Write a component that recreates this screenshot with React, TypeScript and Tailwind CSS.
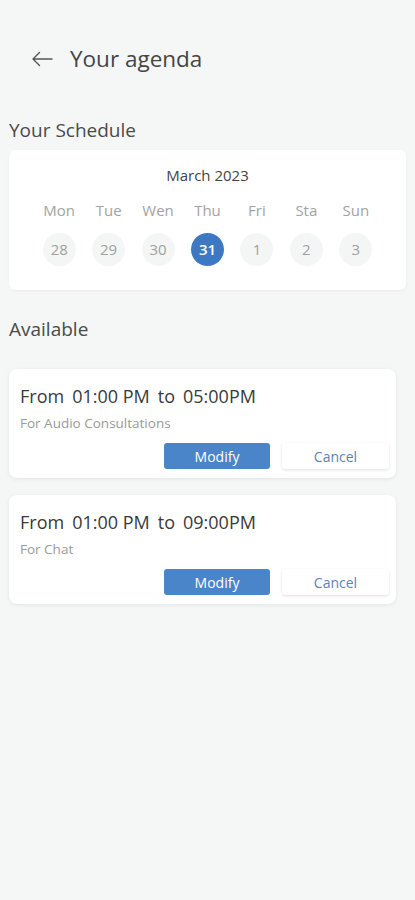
import React from 'react';

const font = { fontFamily: '"Open Sans", "Liberation Sans", sans-serif' };

interface Slot {
  from: string;
  to: string;
  kind: string;
}

const days = [
  { name: 'Mon', num: '28' },
  { name: 'Tue', num: '29' },
  { name: 'Wen', num: '30' },
  { name: 'Thu', num: '31', active: true },
  { name: 'Fri', num: '1' },
  { name: 'Sta', num: '2' },
  { name: 'Sun', num: '3' },
];

const slots: Slot[] = [
  { from: '01:00 PM', to: '05:00PM', kind: 'For Audio Consultations' },
  { from: '01:00 PM', to: '09:00PM', kind: 'For Chat' },
];

function SlotCard({ slot }: { slot: Slot }) {
  return (
    <div className="mr-[19px] rounded-lg bg-white pl-[11px] pr-[7px] pt-[15px] pb-[9px] shadow-[0_1px_4px_rgba(0,0,0,0.08)]">
      <div className="flex gap-[8px] text-[18px] leading-[24px] text-[#3a3a3a]">
        <span>From</span>
        <span>{slot.from}</span>
        <span>to</span>
        <span>{slot.to}</span>
      </div>
      <div className="mt-[6px] text-[13.5px] leading-[18px] text-[#9a9a9a]">{slot.kind}</div>
      <div className="mt-[11px] flex justify-end gap-[12px]">
        <button className="h-[26px] w-[106px] rounded-[3px] bg-[#4a84c9] text-[14px] text-white">
          Modify
        </button>
        <button className="h-[26px] w-[107px] rounded-[3px] bg-white text-[14px] text-[#5a83b8] shadow-[0_1px_3px_rgba(0,0,0,0.12)]">
          Cancel
        </button>
      </div>
    </div>
  );
}

export default function App() {
  return (
    <div className="min-h-[900px] w-[415px] bg-[#f5f7f7]" style={font}>
      <div className="flex items-center pt-[43px] pl-[31px]">
        <svg width="22" height="16" viewBox="0 0 22 16" fill="none" stroke="#555" strokeWidth="1.4" strokeLinecap="round" strokeLinejoin="round">
          <path d="M21 8H2M8.5 1.5L2 8l6.5 6.5" />
        </svg>
        <h1 className="ml-[17px] text-[22.5px] leading-[32px] text-[#454545]">Your agenda</h1>
      </div>

      <h2 className="mt-[42px] pl-[9px] text-[19px] leading-[26px] text-[#4a4a4a]">Your Schedule</h2>

      <div className="mx-[9px] mt-[7px] rounded-md bg-white pt-[15px] pb-[24px] shadow-[0_1px_3px_rgba(0,0,0,0.05)]">
        <div className="text-center text-[15px] leading-[20px] text-[#444]">March 2023</div>
        <div className="mx-auto mt-[15px] grid w-[346px] grid-cols-7">
          {days.map(d => (
            <div key={d.name} className="flex flex-col items-center">
              <span className="text-[15px] leading-[20px] text-[#a3a3a3]">{d.name}</span>
              <span
                className={`mt-[13px] flex h-[33px] w-[33px] items-center justify-center rounded-full text-[15px] ${
                  d.active ? 'bg-[#3d79c2] font-semibold text-white' : 'bg-[#f4f6f6] text-[#a0a0a0]'
                }`}
              >
                {d.num}
              </span>
            </div>
          ))}
        </div>
      </div>

      <h2 className="mt-[26px] pl-[9px] text-[19px] leading-[26px] text-[#4a4a4a]">Available</h2>

      <div className="mt-[27px] flex flex-col gap-[17px] pl-[9px]">
        {slots.map((s, i) => (
          <SlotCard key={i} slot={s} />
        ))}
      </div>
    </div>
  );
}
